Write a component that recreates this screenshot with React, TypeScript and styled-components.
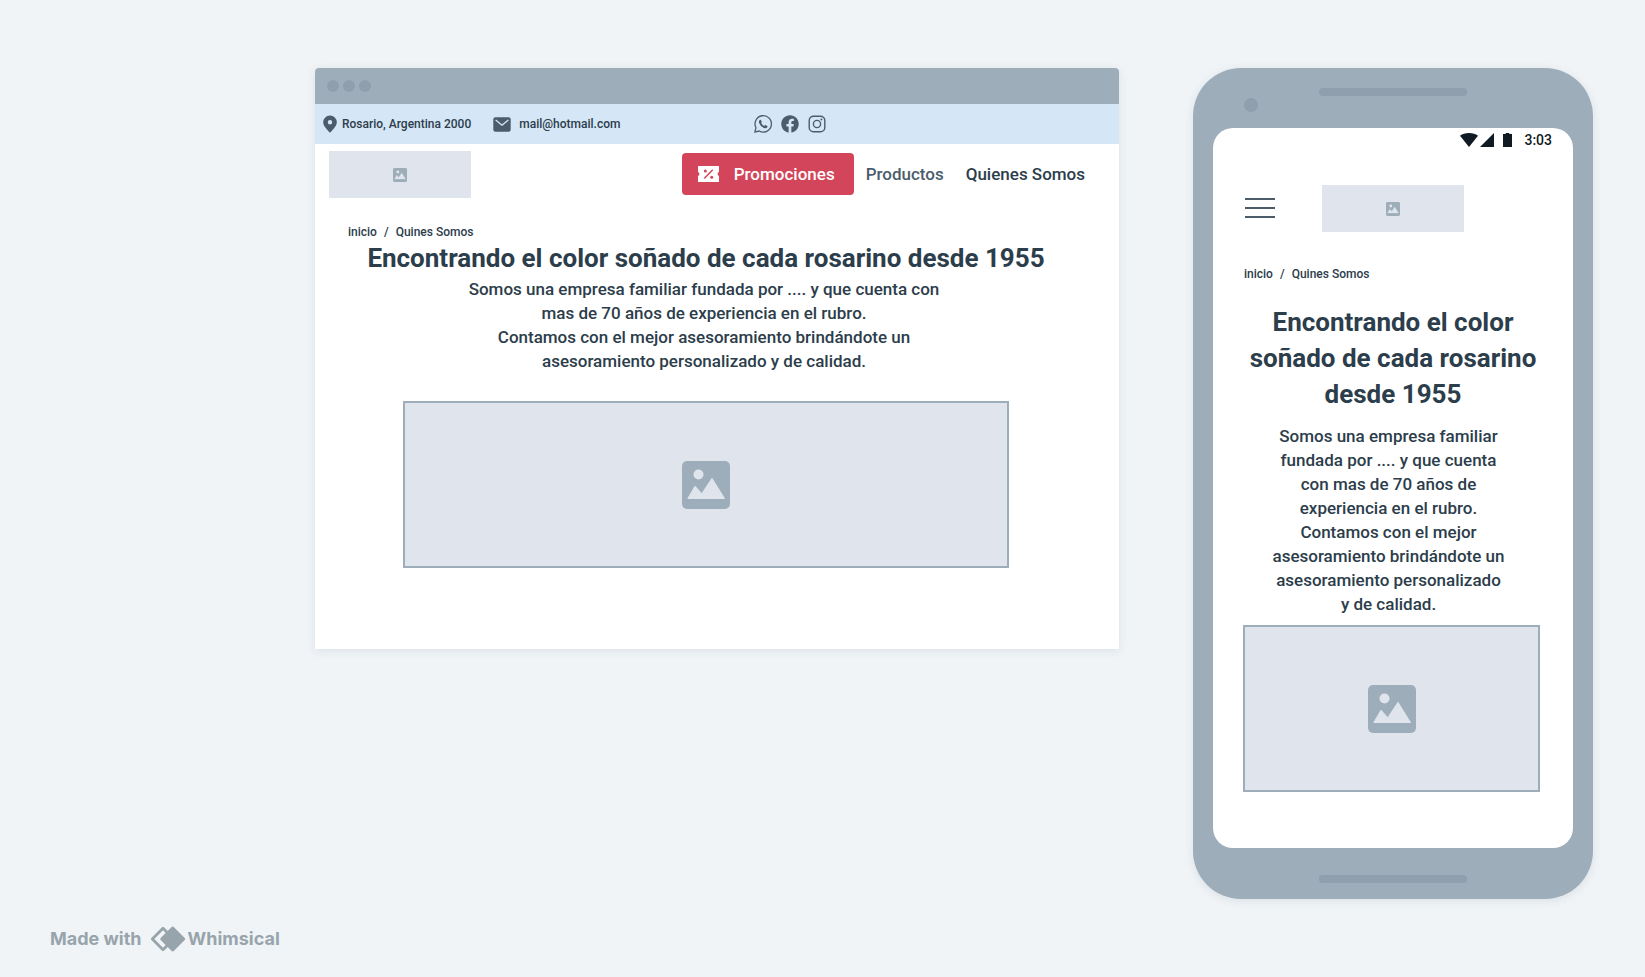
import React from "react";
import styled, { createGlobalStyle } from "styled-components";
import { FaFacebook } from "react-icons/fa";

const color = {
  canvas: "#f0f4f7",
  frame: "#9eadba",
  frameDetail: "#8f9fae",
  info: "#d5e6f6",
  fill: "#e0e5ed",
  ink: "#2c3d4b",
  icon: "#4b5d6b",
  red: "#d3455b",
  credit: "#98a4ac",
};

const GlobalStyle = createGlobalStyle`
  *, *::before, *::after { box-sizing: border-box; }
  body {
    margin: 0;
    background: ${color.canvas};
    color: ${color.ink};
    font-family: Roboto, "Liberation Sans", sans-serif;
    font-weight: 500;
  }
  svg { display: block; flex: none; }
`;

const Page = styled.div`
  padding: 68px 52px 24px 48px;
`;

const Board = styled.main`
  display: flex;
  align-items: flex-start;
  gap: 74px;
  padding-left: 267px;

  @media (max-width: 1400px) {
    padding-left: 0;
    flex-wrap: wrap;
  }
`;

/* Browser window */

const BrowserFrame = styled.section`
  flex: 1 1 0;
  min-width: 720px;
  padding-bottom: 81px;
  border-radius: 4px 4px 0 0;
  background: #fff;
  box-shadow: 0 2px 10px rgba(44, 61, 75, 0.1);
`;

const TitleBar = styled.div`
  display: flex;
  align-items: center;
  gap: 4px;
  height: 36px;
  padding: 0 12px;
  border-radius: 4px 4px 0 0;
  background: ${color.frame};
`;

const Dot = styled.span<{ $size: number }>`
  width: ${(p) => p.$size}px;
  height: ${(p) => p.$size}px;
  border-radius: 50%;
  background: ${color.frameDetail};
`;

const InfoBar = styled.div`
  display: grid;
  grid-template-columns: 6fr 5fr;
  align-items: center;
  height: 40px;
  background: ${color.info};
`;

const Contacts = styled.address`
  display: flex;
  align-items: center;
  gap: 22px;
  padding-left: 8px;
  font-size: 12px;
  font-style: normal;
  line-height: 16px;
  white-space: nowrap;
`;

const Contact = styled.span<{ $gap: number }>`
  display: flex;
  align-items: center;
  gap: ${(p) => p.$gap}px;

  svg { color: ${color.icon}; }
`;

const PlainLink = styled.a`
  color: inherit;
  text-decoration: none;
`;

const Social = styled.div`
  display: flex;
  align-items: center;
  gap: 9px;
  color: ${color.icon};
`;

const SiteHeader = styled.header`
  display: flex;
  align-items: center;
  justify-content: space-between;
  padding: 7px 34px 0 14px;
`;

const Nav = styled.nav`
  display: flex;
  align-items: center;
  padding-bottom: 1px;
  font-size: 17px;
  line-height: 24px;
  white-space: nowrap;
`;

const PromoButton = styled.button`
  display: flex;
  align-items: center;
  gap: 15px;
  height: 42px;
  margin-right: 12px;
  padding: 0 19px 0 16px;
  border: 0;
  border-radius: 4px;
  background: ${color.red};
  color: #fff;
  font: inherit;
`;

const NavLink = styled(PlainLink)<{ $soft?: boolean }>`
  color: ${(p) => (p.$soft ? color.icon : color.ink)};
  & + & { margin-left: 22px; }
`;

const BrowserContent = styled.div`
  padding: 26px 55px 0 33px;
`;

/* Shared content */

const Placeholder = styled.div<{ $outlined?: boolean }>`
  display: flex;
  align-items: center;
  justify-content: center;
  color: ${color.frame};
  background: ${color.fill};
  height: ${(p) => (p.$outlined ? 167 : 47)}px;
  width: ${(p) => (p.$outlined ? "auto" : "142px")};
  border: ${(p) => (p.$outlined ? `2px solid ${color.frame}` : "0")};
`;

const Crumbs = styled.nav`
  display: flex;
  gap: 7px;
  font-size: 12px;
  line-height: 16px;
`;

const Heading = styled.h1`
  margin: 0;
  font-size: 26px;
  font-weight: 700;
  line-height: 36px;
  text-align: center;
`;

const Copy = styled.p`
  margin: 0;
  padding: 1px 4px 0 0;
  font-size: 17px;
  line-height: 24px;
  text-align: center;
`;

const Line = styled.span`
  display: block;
  white-space: nowrap;
`;

const BrowserBanner = styled.div`
  padding: 28px 55px 0;
`;

/* Phone */

const PhoneFrame = styled.section`
  display: flex;
  flex-direction: column;
  flex: none;
  width: 400px;
  padding: 0 20px;
  border-radius: 48px;
  background: ${color.frame};
  box-shadow: 0 2px 10px rgba(44, 61, 75, 0.1);
`;

const PhoneTop = styled.div`
  display: grid;
  grid-template-columns: 1fr 148px 1fr;
  height: 60px;
  padding-top: 20px;

  ${Dot} { margin: 10px 0 0 31px; }
`;

const Speaker = styled.span`
  width: 148px;
  height: 8px;
  border-radius: 4px;
  background: ${color.frameDetail};
`;

const PhoneBottom = styled.div`
  display: flex;
  justify-content: center;
  padding: 27px 0 16px;
`;

const Screen = styled.div`
  padding-bottom: 56px;
  border-radius: 20px;
  background: #fff;
`;

const StatusBar = styled.div`
  display: flex;
  align-items: center;
  justify-content: flex-end;
  height: 24px;
  padding-right: 21px;
  color: #101a22;
  font-size: 14px;
  line-height: 16px;

  time { margin-left: 12px; }
`;

const PhoneHeader = styled.header`
  display: flex;
  align-items: center;
  gap: 47px;
  padding: 33px 32px 34px;
`;

const MenuButton = styled.button`
  display: flex;
  flex-direction: column;
  gap: 7px;
  width: 30px;
  padding: 0 0 1px;
  border: 0;
  background: none;

  span {
    height: 2px;
    width: 100%;
    background: ${color.icon};
  }
`;

const PhoneContent = styled.div`
  padding: 0 33px 0 30px;

  ${Crumbs} { padding: 0 1px 22px; }
  ${Copy} { padding: 12px 6px 9px 0; }
`;

const PhoneHeading = styled(Heading)`
  padding-left: 3px;
`;

/* Credit */

const Credit = styled.footer`
  display: flex;
  align-items: center;
  padding: 27px 2px 0;
  color: ${color.credit};
  font-family: Inter, "Liberation Sans", sans-serif;
  font-size: 18px;
  font-weight: 700;
  line-height: 26px;

  svg { margin: 0 2px 0 8px; }
`;

const PictureIcon = ({ size }: { size: number }) => (
  <svg width={size} height={size} viewBox="0 0 48 48" aria-hidden="true">
    <rect width="48" height="48" rx="5" fill="currentColor" />
    <circle cx="16.5" cy="13.5" r="5" fill={color.fill} />
    <path d="M5.800 37.500L13 25.200l6.800 7.500L30 17.300 42.500 37.500z" fill={color.fill} stroke={color.fill} strokeLinejoin="round" />
  </svg>
);

const PinIcon = () => (
  <svg width="14" height="18" viewBox="0 0 14 18" aria-hidden="true">
    <path fill="currentColor" fillRule="evenodd" d="M7 0.500a6.700 6.700 0 0 1 6.800 6.700c0 4.300-4.400 7.400-5.700 9.600-.5.900-1.700.9-2.200 0C4.600 14.600.2 11.500.2 7.200A6.700 6.700 0 0 1 7 .5zm0 4.600a2.200 2.200 0 1 0 0 4.400 2.200 2.200 0 0 0 0-4.400z" />
  </svg>
);

const MailIcon = () => (
  <svg width="18" height="15" viewBox="0 0 18 15" aria-hidden="true">
    <rect x="0.300" y="0.200" width="17.400" height="14.600" rx="2.200" fill="currentColor" />
    <path d="M3 3.300l6 4.900 6-4.900" fill="none" stroke={color.info} strokeWidth="1.300" strokeLinecap="round" strokeLinejoin="round" />
  </svg>
);

const WhatsappIcon = () => (
  <svg width="18" height="18" viewBox="0 0 18 18" aria-hidden="true">
    <path d="M.8 17.200L2 12.700A8.200 8.200 0 1 1 5.200 16z" fill="none" stroke="currentColor" strokeWidth="1.300" strokeLinejoin="round" />
    <path d="M5.800 4.900q.7-.5 1.100.1l.8 1.700q.2.500-.5 1.400 1.100 2 3 2.800.8-1 1.300-.8l1.700.9q.6.400.1 1.200-1 1.500-3.100.9-3.900-1.400-5.200-5.300-.4-2 .8-2.900z" fill="currentColor" />
  </svg>
);

const InstagramIcon = () => (
  <svg width="18" height="18" viewBox="0 0 18 18" fill="none" stroke="currentColor" strokeWidth="1.400" aria-hidden="true">
    <rect x="1.200" y="1.200" width="15.600" height="15.600" rx="4.300" />
    <circle cx="9" cy="9" r="3.600" />
    <circle cx="13.400" cy="4.600" r="1" fill="currentColor" stroke="none" />
  </svg>
);

const CouponIcon = () => (
  <svg width="21" height="16" viewBox="0 0 21 16" aria-hidden="true">
    <path fill="currentColor" d="M0.600 0h19.800q.6 0 .6.600v5.400a2.100 2.100 0 0 0 0 4v5.400q0 .6-.6.600H.6q-.6 0-.6-.6V10a2.100 2.100 0 0 0 0-4V.6Q0 0 .6 0z" />
    <path d="M6.700 12L14.300 4.200" stroke={color.red} strokeWidth="1.500" strokeLinecap="round" />
    <circle cx="7.300" cy="5" r="1.500" fill={color.red} />
    <circle cx="13.700" cy="11.200" r="1.500" fill={color.red} />
  </svg>
);

const StatusIcons = () => (
  <svg width="52" height="14" viewBox="0 0 52 14" fill="currentColor" aria-hidden="true">
    <path d="M9 14L0 2.800Q3.500 0 9 0t9 2.800z" />
    <path d="M34 0v14H20z" />
    <path d="M43 1h2.700V0h3.600v1H52v13h-9z" />
  </svg>
);

const Diamonds = () => (
  <svg width="36" height="26" viewBox="0 0 36 26" aria-hidden="true">
    <path d="M13 2.300L23.700 13 13 23.700 2.300 13z" fill="none" stroke="currentColor" strokeWidth="2.800" strokeLinejoin="round" />
    <path d="M21.400 1.200q1.300-1.300 2.600 0l10.500 10.500q1.300 1.300 0 2.600L24 24.800q-1.300 1.300-2.600 0L10.900 14.300q-1.300-1.300 0-2.600z" fill="currentColor" />
  </svg>
);

const Breadcrumb = () => (
  <Crumbs aria-label="Ruta">
    <PlainLink href="#inicio">inicio</PlainLink>
    <span>/</span>
    <span>Quines Somos</span>
  </Crumbs>
);

const browserCopy = [
  "Somos una empresa familiar fundada por .... y que cuenta con",
  "mas de 70 años de experiencia en el rubro.",
  "Contamos con el mejor asesoramiento brindándote un",
  "asesoramiento personalizado y de calidad.",
];

const phoneTitle = ["Encontrando el color", "soñado de cada rosarino", "desde 1955"];

const phoneCopy = [
  "Somos una empresa familiar",
  "fundada por .... y que cuenta",
  "con mas de 70 años de",
  "experiencia en el rubro.",
  "Contamos con el mejor",
  "asesoramiento brindándote un",
  "asesoramiento personalizado",
  "y de calidad.",
];

const lines = (items: string[]) => items.map((text) => <Line key={text}>{text}</Line>);

export default function App() {
  return (
    <Page>
      <GlobalStyle />
      <Board>
        <BrowserFrame>
          <TitleBar>
            <Dot $size={12} />
            <Dot $size={12} />
            <Dot $size={12} />
          </TitleBar>
          <InfoBar>
            <Contacts>
              <Contact $gap={5}>
                <PinIcon />
                Rosario, Argentina 2000
              </Contact>
              <Contact $gap={8}>
                <MailIcon />
                <PlainLink href="mailto:mail@hotmail.com">mail@hotmail.com</PlainLink>
              </Contact>
            </Contacts>
            <Social>
              <PlainLink href="#whatsapp" aria-label="WhatsApp"><WhatsappIcon /></PlainLink>
              <PlainLink href="#facebook" aria-label="Facebook"><FaFacebook size={18} /></PlainLink>
              <PlainLink href="#instagram" aria-label="Instagram"><InstagramIcon /></PlainLink>
            </Social>
          </InfoBar>
          <SiteHeader>
            <Placeholder><PictureIcon size={14} /></Placeholder>
            <Nav>
              <PromoButton type="button">
                <CouponIcon />
                Promociones
              </PromoButton>
              <NavLink href="#productos" $soft>Productos</NavLink>
              <NavLink href="#quienes-somos">Quienes Somos</NavLink>
            </Nav>
          </SiteHeader>
          <BrowserContent>
            <Breadcrumb />
            <Heading>Encontrando el color soñado de cada rosarino desde 1955</Heading>
            <Copy>{lines(browserCopy)}</Copy>
            <BrowserBanner>
              <Placeholder $outlined><PictureIcon size={48} /></Placeholder>
            </BrowserBanner>
          </BrowserContent>
        </BrowserFrame>

        <PhoneFrame>
          <PhoneTop>
            <Dot $size={14} />
            <Speaker />
          </PhoneTop>
          <Screen>
            <StatusBar>
              <StatusIcons />
              <time>3:03</time>
            </StatusBar>
            <PhoneHeader>
              <MenuButton type="button" aria-label="Menú">
                <span />
                <span />
                <span />
              </MenuButton>
              <Placeholder><PictureIcon size={14} /></Placeholder>
            </PhoneHeader>
            <PhoneContent>
              <Breadcrumb />
              <PhoneHeading as="h2">{lines(phoneTitle)}</PhoneHeading>
              <Copy>{lines(phoneCopy)}</Copy>
              <Placeholder $outlined><PictureIcon size={48} /></Placeholder>
            </PhoneContent>
          </Screen>
          <PhoneBottom>
            <Speaker />
          </PhoneBottom>
        </PhoneFrame>
      </Board>
      <Credit>
        <span>Made with</span>
        <Diamonds />
        <span>Whimsical</span>
      </Credit>
    </Page>
  );
}
